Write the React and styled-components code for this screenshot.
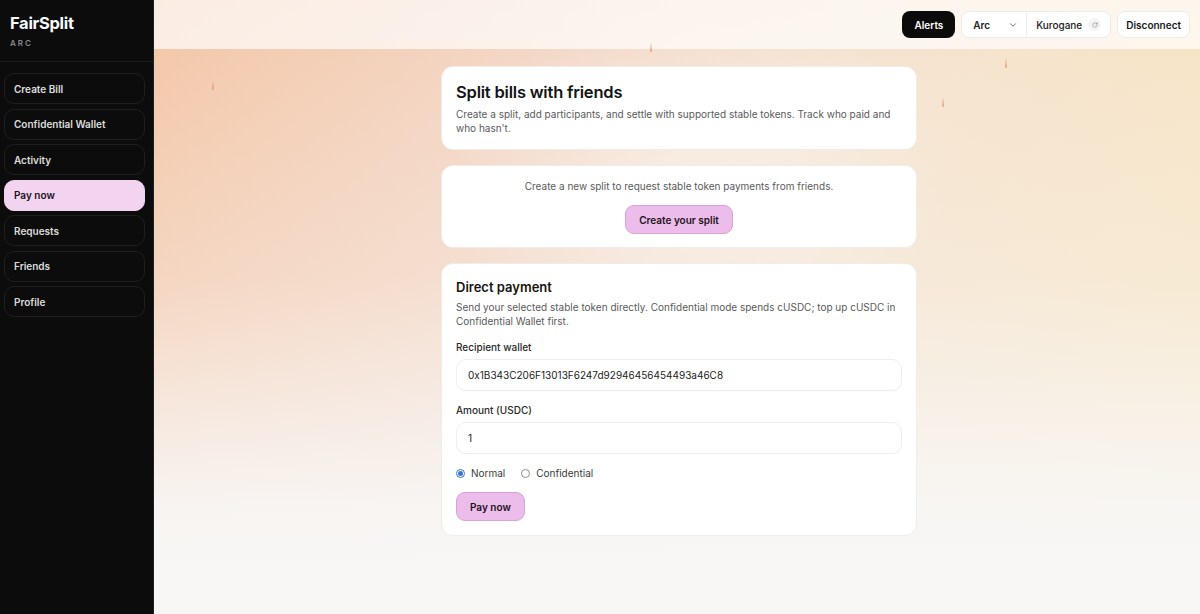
import React, { useState } from 'react';
import styled, { createGlobalStyle } from 'styled-components';
import { ChevronDown, RotateCw } from 'lucide-react';

const GlobalStyle = createGlobalStyle`
  html, body { margin: 0; padding: 0; }
  body {
    font-family: Inter, "Noto Sans", "Liberation Sans", sans-serif;
    -webkit-font-smoothing: antialiased;
  }
  * { box-sizing: border-box; }
`;

// Outer shell: sidebar + main column
const Shell = styled.div`
  display: flex;
  width: 1200px;
  height: 614px;
  overflow: hidden;
`;

const Sidebar = styled.aside`
  width: 154px;
  flex-shrink: 0;
  background: #0c0c0c;
  border-right: 1px solid #1f1f1f;
  display: flex;
  flex-direction: column;
`;

const Brand = styled.div`
  padding: 13px 10px 13px;
  border-bottom: 1px solid #1d1d1d;
`;

const BrandName = styled.div`
  color: #fafafa;
  font-size: 16.5px;
  font-weight: 700;
  letter-spacing: -0.3px;
  line-height: 21px;
`;

const BrandSub = styled.div`
  color: #8a8a8a;
  font-size: 8px;
  font-weight: 600;
  letter-spacing: 2px;
  margin-top: 4px;
`;

const Nav = styled.nav`
  display: flex;
  flex-direction: column;
  gap: 4.5px;
  padding: 11px 8px 0 4px;
`;

const NavItem = styled.div`
  height: 31px;
  display: flex;
  align-items: center;
  padding-left: 9px;
  border-radius: 10px;
  font-size: 10px;
  font-weight: 600;
  color: ${p => (p.$active ? '#1b1220' : '#dcdcdc')};
  background: ${p => (p.$active ? '#f2d4f0' : 'transparent')};
  border: 1px solid ${p => (p.$active ? '#f2d4f0' : '#1f1f1f')};
`;

const Main = styled.main`
  flex: 1;
  position: relative;
  display: flex;
  flex-direction: column;
  background:
    radial-gradient(ellipse 360px 260px at 52% 30%, rgba(255, 255, 255, 0.4), rgba(255, 255, 255, 0) 70%),
    linear-gradient(to bottom, rgba(248, 247, 246, 0) 0%, rgba(248, 247, 246, 0.3) 45%, rgba(248, 247, 246, 0.92) 82%, #f8f7f6 94%),
    linear-gradient(100deg, #f3c5a5 0%, #f3d6c4 35%, #f5e2cf 60%, #f7e4c2 100%);
`;

const Header = styled.header`
  height: 49px;
  flex-shrink: 0;
  background: rgba(255, 255, 255, 0.68);
  display: flex;
  align-items: center;
  justify-content: flex-end;
  gap: 6px;
  padding-right: 10px;
`;

const DarkButton = styled.button`
  height: 27px;
  padding: 0 12px;
  border: none;
  border-radius: 8px;
  background: #0b0b0b;
  color: #fff;
  font-family: inherit;
  font-size: 10px;
  font-weight: 600;
`;

const LightButton = styled.button`
  height: 27px;
  padding: 0 8px;
  border: 1px solid #ececec;
  border-radius: 8px;
  background: #fff;
  color: #1a1a1a;
  font-family: inherit;
  font-size: 10px;
  font-weight: 600;
`;

const Group = styled.div`
  height: 27px;
  display: flex;
  align-items: center;
  border: 1px solid #ececec;
  border-radius: 8px;
  background: #fff;
`;

const GroupPart = styled.div`
  height: 100%;
  display: flex;
  align-items: center;
  padding: 0 ${p => p.$pr}px 0 ${p => p.$pl}px;
  font-size: 10px;
  font-weight: ${p => p.$weight || 600};
  color: #222;
  & + & { border-left: 1px solid #ededed; }
`;

const ChevronWrap = styled.span`
  display: flex;
  margin-left: 18px;
  color: #555;
`;

const RefreshDot = styled.span`
  width: 13px;
  height: 13px;
  border-radius: 50%;
  background: #f4f4f4;
  display: flex;
  align-items: center;
  justify-content: center;
  color: #8a8a8a;
  margin-left: 6px;
`;

const Content = styled.div`
  flex: 1;
  display: flex;
  flex-direction: column;
  align-items: center;
  gap: 15px;
  padding: 17px 0 0 4px;
`;

const Card = styled.section`
  width: 476px;
  background: #fff;
  border-radius: 12px;
  border: 1px solid #f2ece8;
  padding: ${p => p.$pad || '14px'};
  display: flex;
  flex-direction: column;
  align-items: ${p => (p.$center ? 'center' : 'stretch')};
`;

const Title = styled.h1`
  margin: 0;
  font-size: 16.5px;
  font-weight: 600;
  color: #141414;
  letter-spacing: -0.2px;
  line-height: 22px;
`;

const SubTitle = styled.h2`
  margin: 0;
  font-size: 13px;
  font-weight: 600;
  color: #141414;
  line-height: 18px;
`;

const Muted = styled.p`
  margin: ${p => p.$m || '4px 0 0'};
  font-size: 10px;
  line-height: 14px;
  color: #5a5a5a;
`;

const PinkButton = styled.button`
  height: ${p => p.$h || 29}px;
  padding: 0 13px;
  border-radius: 9px;
  border: 1px solid #d9a3d6;
  background: #ecbcea;
  color: #1d1320;
  font-family: inherit;
  font-size: 10px;
  font-weight: 600;
  margin-top: ${p => p.$mt || 0}px;
  align-self: ${p => (p.$left ? 'flex-start' : 'center')};
`;

const Label = styled.label`
  font-size: 10px;
  line-height: 14px;
  font-weight: 500;
  color: #2a2a2a;
  margin: 12px 0 5px;
`;

const Field = styled.div`
  height: 32px;
  border: 1px solid #eeeeee;
  border-radius: 10px;
  display: flex;
  align-items: center;
  padding-left: 11px;
  font-size: 10px;
  color: #1c1c1c;
  box-shadow: 0 1px 2px rgba(0, 0, 0, 0.02);
`;

const RadioRow = styled.div`
  display: flex;
  align-items: center;
  gap: 16px;
  height: 12px;
  margin-top: 13px;
`;

const RadioLabel = styled.label`
  display: flex;
  align-items: center;
  gap: 6px;
  font-size: 10px;
  color: #3a3a3a;
`;

const RadioMark = styled.span`
  width: 9px;
  height: 9px;
  border-radius: 50%;
  border: 1px solid ${p => (p.$on ? '#3a73d0' : '#8f8f8f')};
  display: flex;
  align-items: center;
  justify-content: center;
  &::after {
    content: '';
    width: 5px;
    height: 5px;
    border-radius: 50%;
    background: ${p => (p.$on ? '#3a73d0' : 'transparent')};
  }
`;

const Spark = styled.span`
  position: absolute;
  width: 2px;
  height: 10px;
  border-radius: 1px;
  background: linear-gradient(to bottom, rgba(230, 160, 110, 0), rgba(220, 140, 90, 0.7));
  pointer-events: none;
`;

const navItems = ['Create Bill', 'Confidential Wallet', 'Activity', 'Pay now', 'Requests', 'Friends', 'Profile'];

const sparks = [
  { left: 58, top: 80 },
  { left: 496, top: 42 },
  { left: 851, top: 58 },
  { left: 788, top: 97 },
];

export default function App() {
  const [mode, setMode] = useState('normal');

  return (
    <>
      <GlobalStyle />
      <Shell>
        <Sidebar>
          <Brand>
            <BrandName>FairSplit</BrandName>
            <BrandSub>ARC</BrandSub>
          </Brand>
          <Nav>
            {navItems.map(item => (
              <NavItem key={item} $active={item === 'Pay now'}>{item}</NavItem>
            ))}
          </Nav>
        </Sidebar>

        <Main>
          {sparks.map((s, i) => (
            <Spark key={i} style={{ left: s.left, top: s.top }} />
          ))}
          <Header>
            <DarkButton>Alerts</DarkButton>
            <Group>
              <GroupPart $pl={11} $pr={8}>
                Arc
                <ChevronWrap><ChevronDown size={10} strokeWidth={2} /></ChevronWrap>
              </GroupPart>
              <GroupPart $weight={500} $pl={9} $pr={9}>
                Kurogane
                <RefreshDot><RotateCw size={6} strokeWidth={2.4} /></RefreshDot>
              </GroupPart>
            </Group>
            <LightButton>Disconnect</LightButton>
          </Header>

          <Content>
            <Card $pad="14px 14px 14px">
              <Title>Split bills with friends</Title>
              <Muted>
                Create a split, add participants, and settle with supported stable tokens. Track who paid and
                who hasn't.
              </Muted>
            </Card>

            <Card $center $pad="13px 14px 13px">
              <Muted $m="0">Create a new split to request stable token payments from friends.</Muted>
              <PinkButton $mt={12}>Create your split</PinkButton>
            </Card>

            <Card $pad="14px 14px 14px">
              <SubTitle>Direct payment</SubTitle>
              <Muted>
                Send your selected stable token directly. Confidential mode spends cUSDC; top up cUSDC in
                Confidential Wallet first.
              </Muted>
              <Label>Recipient wallet</Label>
              <Field>0x1B343C206F13013F6247d92946456454493a46C8</Field>
              <Label>Amount (USDC)</Label>
              <Field>1</Field>
              <RadioRow>
                <RadioLabel onClick={() => setMode('normal')}>
                  <RadioMark $on={mode === 'normal'} />
                  Normal
                </RadioLabel>
                <RadioLabel onClick={() => setMode('confidential')}>
                  <RadioMark $on={mode === 'confidential'} />
                  Confidential
                </RadioLabel>
              </RadioRow>
              <PinkButton $left $mt={13} $h={29}>Pay now</PinkButton>
            </Card>
          </Content>
        </Main>
      </Shell>
    </>
  );
}
